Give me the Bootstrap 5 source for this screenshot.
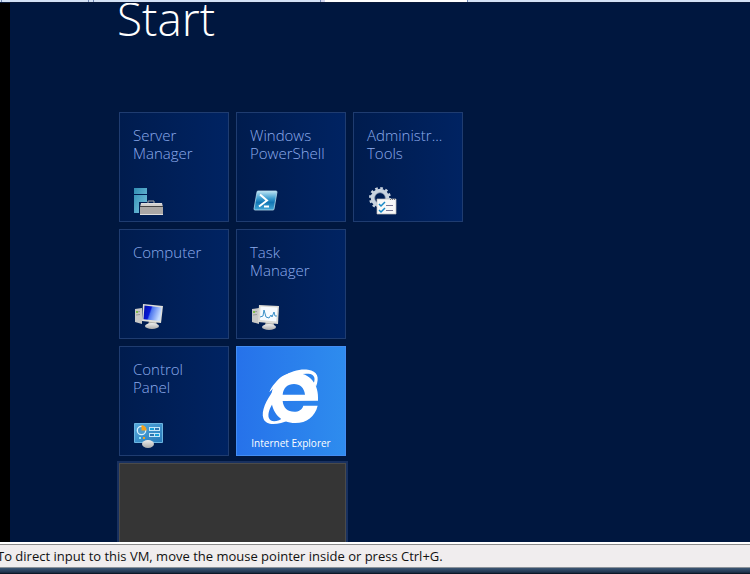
<!DOCTYPE html>
<html lang="en">
<head>
<meta charset="utf-8">
<meta name="viewport" content="width=device-width, initial-scale=1">
<title>Start</title>
<link href="https://cdn.jsdelivr.net/npm/bootstrap@5.3.0/dist/css/bootstrap.min.css" rel="stylesheet">
<style>
body { font-family: "Open Sans", "Noto Sans", sans-serif; background: #00173f; }
.tab-strip { height: 3px; background: #d3e1f5; border-bottom: 1px solid #0a1a3a; }
.tab-strip span { border-right: 1px solid #7289b5; }
.tab-a { width: 2px; } .tab-b { width: 87px; } .tab-c { width: 5px; } .tab-d { width: 227px; } .tab-e { width: 147px; background: #fff; border-left: 4px solid #d3d6f0; }
.vm-screen { border-left: 10px solid #000; background: #00173f; min-height: 0; padding-left: 109px; }
.start-title { font-size: 46px; font-weight: 300; line-height: 60px; color: #fff; margin: -15px 0 64px -2px; }
.tiles { display: grid; grid-template-columns: repeat(3, 110px); grid-auto-rows: 110px; gap: 7px; }
.tile { border: 1px solid #1f3c70; background: linear-gradient(90deg, #001c4e, #002362); color: #8cabec; font-size: 15px; font-weight: 300; line-height: 18px; padding: 13px 13px 5px; }
.tile:hover { color: #a9c0f0; }
.tile svg { width: 32px; height: 30px; }
.tile-new-row { grid-column-start: 1; }
.tile-ie { background: linear-gradient(90deg, #2672ea, #2e8cee); border-color: #438cf2; color: #fff; font-size: 10px; font-weight: 400; line-height: 14px; padding: 0 0 5px; }
.tile-ie:hover { color: #fff; }
.tile-ie svg { width: 62px; height: 62px; margin-top: 19px; }
.tile-wide { grid-column: 1 / span 2; background: #353535; border: 1px solid #4a4a4a; outline: 2px solid #19315f; }
.status { border-top: 2px solid #fff; background: #f0edee; color: #111; font-size: 13px; line-height: 22px; }
.status p { border-top: 1px solid #8b8b8b; border-bottom: 1px solid #8b9299; text-indent: -3px; }
.frame-edge { height: 6px; background: linear-gradient(#3c5674, #20354f 70%, #050c18); }
</style>
</head>
<body>
<div class="vh-100 d-flex flex-column overflow-hidden">
  <div class="tab-strip d-flex flex-shrink-0"><span class="tab-a"></span><span class="tab-b"></span><span class="tab-c"></span><span class="tab-d"></span><span class="tab-e"></span></div>
  <main class="vm-screen flex-grow-1 overflow-hidden">
    <h1 class="start-title">Start</h1>
    <nav class="tiles" aria-label="Start tiles">
      <a class="tile d-flex flex-column justify-content-between text-decoration-none" href="#">
        <span>Server Manager</span>
        <svg viewBox="0 0 32 30" aria-hidden="true">
          <defs><linearGradient id="blue" x2="1" y2="1"><stop stop-color="#318eb3"/><stop offset="1" stop-color="#79c4df"/></linearGradient>
          <linearGradient id="metal" x2="0" y2="1"><stop stop-color="#eee"/><stop offset="1" stop-color="#aaa"/></linearGradient></defs>
          <path d="M1 2h13v6H1zM1 9h13v7H6v11H1z" fill="url(#blue)"/>
          <path d="M15 17v-2h6v2" fill="none" stroke="#aaa"/>
          <path d="M8 17h21l1 4H7z" fill="#d2cfcc"/><path d="M7 20.500h23" stroke="#444"/>
          <path d="M7 21h23v8H7z" fill="#aaa7a5"/><path d="M7 28.500h23M8 17.500h21" stroke="#ddd"/>
        </svg>
      </a>
      <a class="tile d-flex flex-column justify-content-between text-decoration-none" href="#">
        <span>Windows PowerShell</span>
        <svg viewBox="0 0 32 30" aria-hidden="true">
          <defs><linearGradient id="ps" x2="0" y2="1"><stop stop-color="#bfe5f4"/><stop offset=".4" stop-color="#3a9bcf"/><stop offset=".6" stop-color="#1276b4"/><stop offset="1" stop-color="#43a9d8"/></linearGradient></defs>
          <path d="M8 5h18q1 0 1 1l-3 17q0 1-1 1H5q-1 0-1-1L7 6q0-1 1-1z" fill="url(#ps)" stroke="#b5dcee" stroke-width=".8"/>
          <path d="M10 8.500l7 6-8 6M14 20.500h5" fill="none" stroke="#fff" stroke-width="2"/>
        </svg>
      </a>
      <a class="tile d-flex flex-column justify-content-between text-decoration-none" href="#">
        <span>Administr... Tools</span>
        <svg viewBox="0 0 32 30" aria-hidden="true">
          <circle cx="13" cy="12" r="7.300" fill="none" stroke="#c9d3df" stroke-width="4"/>
          <circle cx="13" cy="12" r="9.800" fill="none" stroke="#c9d3df" stroke-width="2.400" stroke-dasharray="2.600 2.531"/>
          <circle cx="13" cy="12" r="5.300" fill="none" stroke="#7c8da6" stroke-width=".7"/>
          <path d="M10 13h19v15H10z" fill="#f7f7f7" stroke="#bbb" stroke-width=".7"/>
          <path d="M23 13.500h6" stroke="#777" stroke-dasharray="1 1"/>
          <path d="M12 18l2 2 4-4M12 24l2 2 4-4" fill="none" stroke="#1688c7" stroke-width="1.500"/>
          <path d="M19 19.500h7M19 24.500h7" stroke="#777795" stroke-width="1.200"/>
        </svg>
      </a>
      <a class="tile d-flex flex-column justify-content-between text-decoration-none" href="#">
        <span>Computer</span>
        <svg viewBox="0 0 32 30" aria-hidden="true">
          <defs><linearGradient id="screen" x2="1" y2=".3"><stop stop-color="#0010a0"/><stop offset=".42" stop-color="#0718d8"/><stop offset=".5" stop-color="#4c76ef"/><stop offset="1" stop-color="#c5dcff"/></linearGradient></defs>
          <path d="M2 6l7-1v16l-7-2z" fill="#c8c8c6"/><path d="M3 9l4-.5M3 12l4-.5" stroke="#999"/><circle cx="4" cy="9" r=".9" fill="#6ac31c"/>
          <path d="M16 18h7l1 4h-9z" fill="#b3b3ae"/><ellipse cx="19" cy="23" rx="7" ry="3" fill="url(#metal)"/>
          <path d="M10 1l20 2-2 17-19-2z" fill="#e0dfd9"/><path d="M11.500 2.500l17 2-1.500 13.500-16.500-1.700z" fill="url(#screen)"/>
        </svg>
      </a>
      <a class="tile d-flex flex-column justify-content-between text-decoration-none" href="#">
        <span>Task<br>Manager</span>
        <svg viewBox="0 0 32 30" aria-hidden="true">
          <path d="M2 6l7-1v16l-7-2z" fill="#c8c8c6"/><path d="M3 9l4-.5M3 12l4-.5" stroke="#999"/><circle cx="4" cy="9" r=".9" fill="#6ac31c"/>
          <path d="M16 18h7l1 4h-9z" fill="#b3b3ae"/><ellipse cx="19" cy="24" rx="7" ry="3" fill="url(#metal)"/>
          <path d="M9 2l20 1-1 18-20-2z" fill="#dcdbd5"/><path d="M10.500 3.500l17 1-1.300 14-16.200-1.500z" fill="#f7fbff"/>
          <path d="M10 14l3-1 1-6 2 7 3 1 2-3 1 2 2-5 1 4h2" fill="none" stroke="#3c91c8"/>
        </svg>
      </a>
      <a class="tile tile-new-row d-flex flex-column justify-content-between text-decoration-none" href="#">
        <span>Control<br>Panel</span>
        <svg viewBox="0 0 32 30" aria-hidden="true">
          <defs><linearGradient id="panel" x2="1" y2="1"><stop stop-color="#54a9dc"/><stop offset="1" stop-color="#2779b9"/></linearGradient></defs>
          <path d="M1.500 3.500h28v19h-28z" fill="url(#panel)" stroke="#6cb5e0"/>
          <circle cx="8.500" cy="10.500" r="4.200" fill="#4e9dce" stroke="#d9f1ff" stroke-width="1.300"/><path d="M8.500 10.500V5a5 5 0 0 1 5 5.500z" fill="#f5a11b"/>
          <path d="M16 7h11v4H16zM16 13h11v4H16z" fill="#c5e7f8"/><path d="M17 9h4M22 15h4" stroke="#19a0d8" stroke-width="2"/><path d="M22 9h4M17 15h4" stroke="#2f75b0" stroke-width="2"/>
          <path d="M6 18h2" stroke="#8eeaff" stroke-width="2"/><path d="M10 18h2" stroke="#f5a11b" stroke-width="2"/>
          <ellipse cx="15" cy="24" rx="6" ry="4" fill="url(#metal)"/>
        </svg>
      </a>
      <a class="tile tile-ie d-flex flex-column align-items-center justify-content-between text-decoration-none" href="#">
        <svg viewBox="84 78 186 186" aria-hidden="true">
          <path fill="#fff" fill-rule="evenodd" d="M258 182C262 132 233 98 190 98C145 98 118 132 118 174C118 218 146 249 190 249C224 249 249 230 257 197H214C210 209 200 215 187 215C167 215 154 204 152 183ZM152 164C154 144 167 132 186 132C204 132 217 144 219 164Z"/>
          <path fill="#fff" d="M112 157C127 115 185 83 228 89C257 93 263 112 252 140L245 130C251 116 247 105 235 102C202 96 143 120 112 157Z"/>
          <path fill="#fff" d="M126 150C102 180 87 214 94 235C102 260 142 254 170 240L158 231C137 246 117 248 111 235C106 222 113 204 123 189Z"/>
        </svg>
        <span>Internet Explorer</span>
      </a>
      <a class="tile-wide" href="#" aria-label="Desktop"></a>
    </nav>
  </main>
  <footer class="status flex-shrink-0"><p class="m-0 text-nowrap">To direct input to this VM, move the mouse pointer inside or press Ctrl+G.</p></footer>
  <div class="frame-edge flex-shrink-0"></div>
</div>
<script src="https://cdn.jsdelivr.net/npm/bootstrap@5.3.0/dist/js/bootstrap.bundle.min.js"></script>
</body>
</html>
